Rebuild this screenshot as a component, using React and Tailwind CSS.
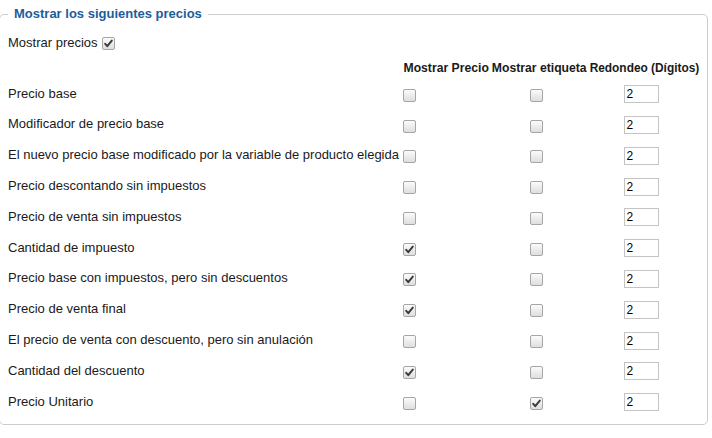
import React from 'react';

const rows = [
  { label: 'Precio base', show: false, tag: false },
  { label: 'Modificador de precio base', show: false, tag: false },
  { label: 'El nuevo precio base modificado por la variable de producto elegida', show: false, tag: false },
  { label: 'Precio descontando sin impuestos', show: false, tag: false },
  { label: 'Precio de venta sin impuestos', show: false, tag: false },
  { label: 'Cantidad de impuesto', show: true, tag: false },
  { label: 'Precio base con impuestos, pero sin descuentos', show: true, tag: false },
  { label: 'Precio de venta final', show: true, tag: false },
  { label: 'El precio de venta con descuento, pero sin anulación', show: false, tag: false },
  { label: 'Cantidad del descuento', show: true, tag: false },
  { label: 'Precio Unitario', show: false, tag: true },
];

const Check = ({ checked }) => (
  <span className="inline-flex items-center justify-center w-[13px] h-[13px] rounded-[2px] border border-[#a6a6a6] bg-gradient-to-b from-[#fbfbfb] to-[#dedede] align-middle">
    {checked && (
      <svg width="9" height="9" viewBox="0 0 9 9">
        <path d="M1.2 4.8 L3.3 7.2 L7.8 1.6" fill="none" stroke="#3a3a3a" strokeWidth="1.9" strokeLinecap="round" strokeLinejoin="round" />
      </svg>
    )}
  </span>
);

const App = () => {
  return (
    <div className="w-[712px] h-[438px] bg-white font-['Liberation_Sans',Arial,sans-serif] text-[13px] text-[#1a1a1a] overflow-hidden">
      <fieldset className="ml-[-1px] mt-[6px] w-[709px] h-[419px] border border-[#cccccc] rounded-[5px] px-[6px] pb-[5px]">
        <legend className="ml-[2px] px-[6px] font-bold text-[#1c5d9b] leading-[16px]">
          Mostrar los siguientes precios
        </legend>
        <div className="mt-[11px] h-[20px] flex items-center pl-[2px] gap-[4px]">
          <span>Mostrar precios</span>
          <Check checked />
        </div>
        <table className="mt-[6px] ml-[1px] border-collapse">
          <thead>
            <tr className="h-[19px]">
              <th></th>
              <th className="px-[1.5px] font-bold text-[12.2px] text-left whitespace-nowrap">Mostrar Precio</th>
              <th className="px-[1.5px] font-bold text-[12.2px] text-left whitespace-nowrap">Mostrar etiqueta</th>
              <th className="px-[1.5px] font-bold text-[11.9px] text-left whitespace-nowrap">Redondeo (Dígitos)</th>
            </tr>
          </thead>
          <tbody>
            {rows.map((row) => (
              <tr key={row.label} className="h-[30.8px]">
                <td className="pl-[1px] pr-[3px] whitespace-nowrap">{row.label}</td>
                <td className="px-[1.5px] pt-[2px]">
                  <Check checked={row.show} />
                </td>
                <td className="px-[1.5px] pt-[2px] text-center">
                  <span className="mr-[5px]">
                    <Check checked={row.tag} />
                  </span>
                </td>
                <td className="px-[1.5px] text-center">
                  <input
                    type="text"
                    defaultValue="2"
                    className="mr-[5px] w-[35px] h-[18px] border border-[#c4c4c4] px-[1px] text-[12px] text-black leading-none align-middle outline-none"
                  />
                </td>
              </tr>
            ))}
          </tbody>
        </table>
      </fieldset>
    </div>
  );
};

export default App;
